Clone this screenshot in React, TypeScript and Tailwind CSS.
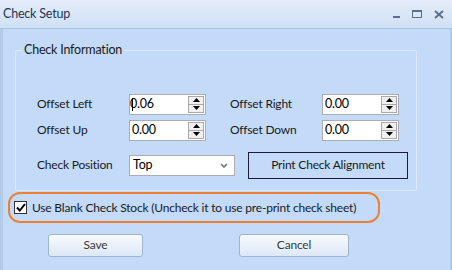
import React from 'react';

const FONT = { fontFamily: 'Lato, "Noto Sans", sans-serif' };

const Spin: React.FC<{ value: string; caret?: boolean }> = ({ value, caret }) => (
  <div className="relative w-[77px] h-[21px] bg-white border border-[#abadb3] flex items-center">
    <span className="pl-[2px] text-[12.5px] text-black leading-none">
      {caret && <span className="inline-block w-px h-[13px] bg-black align-middle -mr-[3px]" />}
      {value}
    </span>
    <div className="absolute right-[1px] top-[1px] bottom-[1px] w-[16px] flex flex-col border border-[#a9a9a9] bg-[#f0f0f0]">
      <div className="flex-1 flex items-center justify-center border-b border-[#a9a9a9]">
        <svg width="7" height="4" viewBox="0 0 7 4"><path d="M3.5 0 L7 4 L0 4 Z" fill="#000" /></svg>
      </div>
      <div className="flex-1 flex items-center justify-center">
        <svg width="7" height="4" viewBox="0 0 7 4"><path d="M0 0 L7 0 L3.5 4 Z" fill="#000" /></svg>
      </div>
    </div>
  </div>
);

const DlgButton: React.FC<{ label: string; w: string }> = ({ label, w }) => (
  <button className={`${w} h-[23px] rounded-[3px] border border-[#9fb4cf] bg-gradient-to-b from-[#f7fafe] to-[#dde8f6] text-[12px] text-[#3a3a3a]`}>
    {label}
  </button>
);

export default function App() {
  return (
    <div style={FONT} className="w-[452px] h-[270px] flex flex-col bg-[#c3dbf9] overflow-hidden tracking-[-0.2px]">
      {/* title bar */}
      <div className="h-[29px] shrink-0 flex items-center justify-between bg-gradient-to-b from-[#e4edf9] to-[#cfe0f5] border-b border-[#a9c3e4]">
        <span className="pl-[3px] text-[12.5px] text-[#1e3554]">Check Setup</span>
        <div className="flex items-center gap-[12px] pr-[8px]">
          <svg width="7" height="10" viewBox="0 0 7 10"><rect x="0" y="7" width="7" height="2" fill="#5d6f86" /></svg>
          <svg width="10" height="8" viewBox="0 0 10 8"><rect x="0.5" y="0.5" width="9" height="7" fill="none" stroke="#5d6f86" /><rect x="0" y="0" width="10" height="2" fill="#5d6f86" /></svg>
          <svg width="10" height="9" viewBox="0 0 10 9"><path d="M1 1 L9 8 M9 1 L1 8" stroke="#5d6f86" strokeWidth="2" /></svg>
        </div>
      </div>

      {/* body */}
      <div className="flex-1 flex flex-col border-l-[3px] border-r-[2px] border-[#b2cbea] pl-[12px] pr-[33px]">
        <fieldset className="mt-[12px] h-[150px] border border-[#dde9f8] rounded-[2px]">
          <legend className="ml-[6px] px-[2px] text-[12.5px] text-[#1a1a1a]">Check Information</legend>
          <div className="flex flex-col gap-[5px] mt-[34px] pl-[21px]">
            <div className="flex items-center">
              <span className="w-[92px] text-[12px] text-[#1a1a1a]">Offset Left</span>
              <Spin value="0.06" caret />
              <span className="ml-[24px] w-[92px] text-[12px] text-[#1a1a1a]">Offset Right</span>
              <Spin value="0.00" />
            </div>
            <div className="flex items-center">
              <span className="w-[92px] text-[12px] text-[#1a1a1a]">Offset Up</span>
              <Spin value="0.00" />
              <span className="ml-[24px] w-[92px] text-[12px] text-[#1a1a1a]">Offset Down</span>
              <Spin value="0.00" />
            </div>
            <div className="flex items-center mt-[6px]">
              <span className="w-[92px] text-[12px] text-[#1a1a1a]">Check Position</span>
              <div className="w-[106px] h-[21px] bg-white border border-[#abadb3] flex items-center justify-between pl-[3px] pr-[6px]">
                <span className="text-[12.5px] text-black">Top</span>
                <svg width="8" height="5" viewBox="0 0 8 5"><path d="M1 1 L4 4 L7 1" fill="none" stroke="#6d6d6d" strokeWidth="1.5" /></svg>
              </div>
              <button className="ml-[13px] w-[160px] h-[27px] border border-[#1b1b3a] text-[12px] text-[#1a1a1a]">
                Print Check Alignment
              </button>
            </div>
          </div>
        </fieldset>

        <div className="-ml-[7px] mt-[1px] w-[372px] h-[31px] rounded-[12px] border-[2px] border-[#ee7f33] flex items-center pl-[4px] gap-[5px]">
          <div className="w-[13px] h-[13px] bg-white border border-[#333] flex items-center justify-center">
            <svg width="10" height="9" viewBox="0 0 10 9"><path d="M1 4.5 L3.8 7.5 L9 1" fill="none" stroke="#000" strokeWidth="2" /></svg>
          </div>
          <span className="text-[12px] text-[#1a1a1a] whitespace-nowrap">Use Blank Check Stock (Uncheck it to use pre-print check sheet)</span>
        </div>

        <div className="flex mt-[8px]">
          <div className="ml-[33px]"><DlgButton label="Save" w="w-[95px]" /></div>
          <div className="ml-[96px]"><DlgButton label="Cancel" w="w-[110px]" /></div>
        </div>
      </div>
    </div>
  );
}
